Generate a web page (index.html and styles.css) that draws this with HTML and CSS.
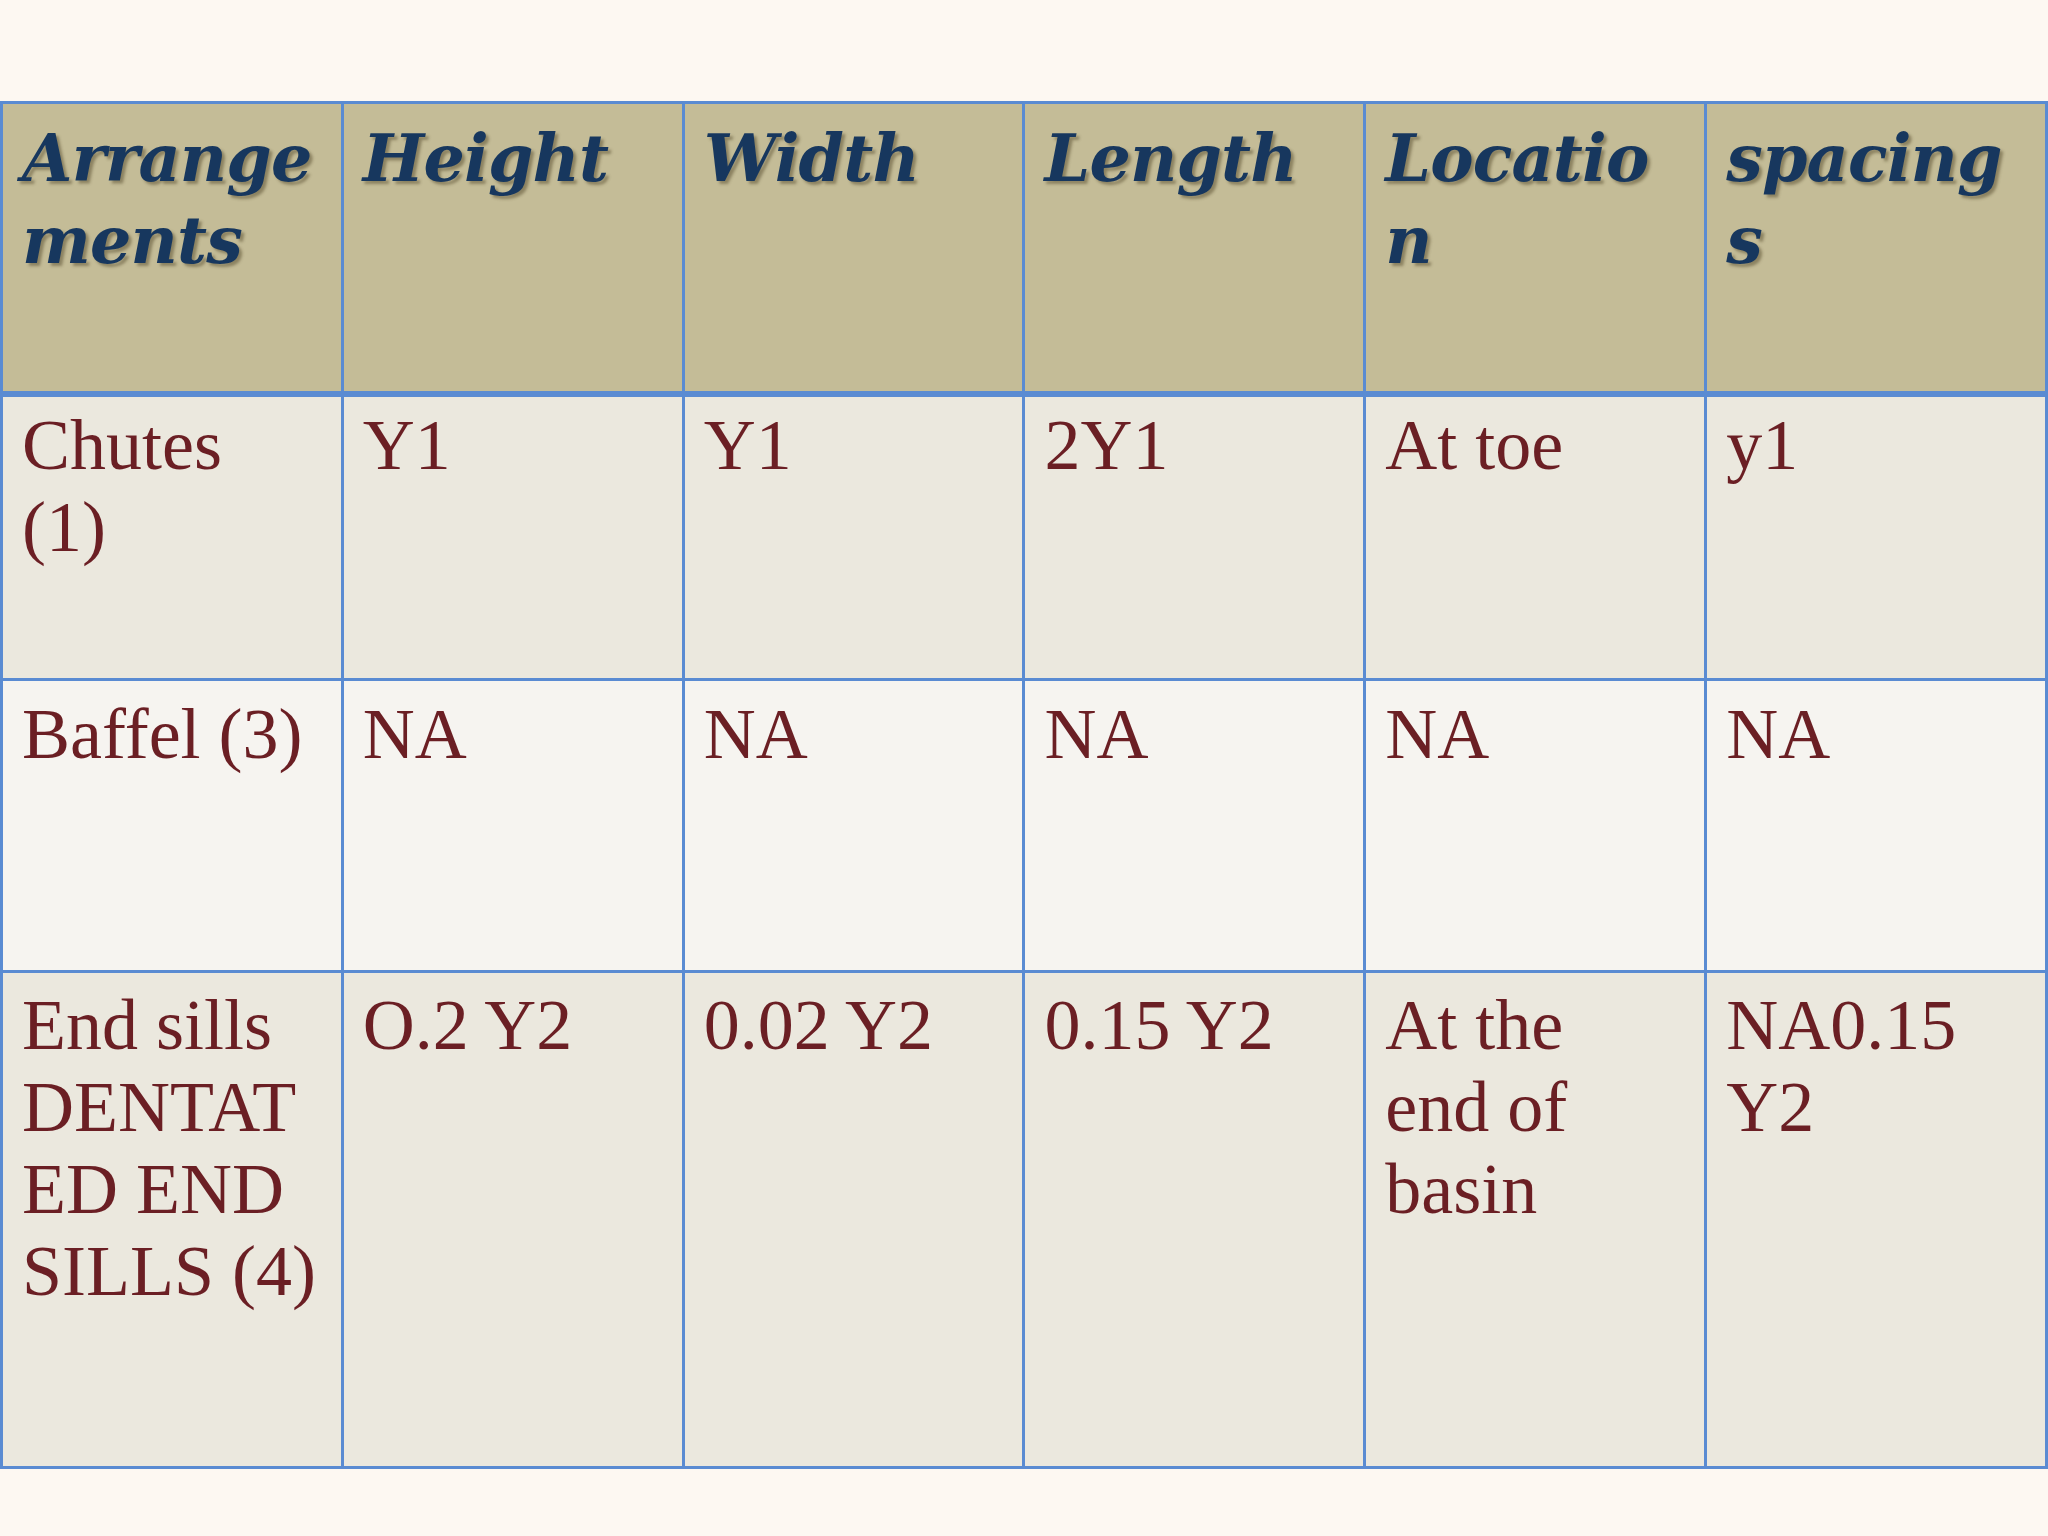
FILE: index.html
```html
<!DOCTYPE html>
<html lang="en">
<head>
<meta charset="utf-8">
<title>Arrangements</title>
<link rel="stylesheet" href="styles.css">
</head>
<body>
<main class="slide">
  <table class="grid">
    <thead>
      <tr class="head-row">
        <th>Arrange<br>ments</th>
        <th>Height</th>
        <th>Width</th>
        <th>Length</th>
        <th>Locatio<br>n</th>
        <th>spacing<br>s</th>
      </tr>
    </thead>
    <tbody>
      <tr class="row row-a row-1">
        <td>Chutes<br>(1)</td>
        <td>Y1</td>
        <td>Y1</td>
        <td>2Y1</td>
        <td>At toe</td>
        <td>y1</td>
      </tr>
      <tr class="row row-b row-2">
        <td>Baffel (3)</td>
        <td>NA</td>
        <td>NA</td>
        <td>NA</td>
        <td>NA</td>
        <td>NA</td>
      </tr>
      <tr class="row row-a row-3">
        <td>End sills<br>DENTAT<br>ED END<br>SILLS (4)</td>
        <td>O.2 Y2</td>
        <td>0.02 Y2</td>
        <td>0.15 Y2</td>
        <td>At the<br>end of<br>basin</td>
        <td>NA0.15<br>Y2</td>
      </tr>
    </tbody>
  </table>
</main>
</body>
</html>
```
FILE: styles.css
```css
html, body {
  margin: 0;
  padding: 0;
  background: #fdf8f2;
}

.slide {
  width: 2048px;
  height: 1536px;
  padding-top: 101px;
  box-sizing: border-box;
  overflow: hidden;
}

.grid {
  width: 2048px;
  table-layout: fixed;
  border-collapse: collapse;
}

.grid th,
.grid td {
  border: 3px solid #5a8bd2;
  vertical-align: top;
  text-align: left;
  padding: 10px 10px 0 19px;
  box-sizing: border-box;
}

.head-row th {
  background: #c4bc97;
  height: 291px;
  border-bottom: 6px solid #5a8bd2;
  padding-top: 13px;
  font-family: "DejaVu Serif", "Liberation Serif", serif;
  font-weight: bold;
  font-style: italic;
  font-size: 65px;
  line-height: 82px;
  color: #17375e;
  text-shadow: 3px 3px 3px rgba(70, 60, 30, 0.45);
  letter-spacing: -0.8px;
}

.row td {
  font-family: "Liberation Serif", "Times New Roman", serif;
  font-size: 72px;
  line-height: 82px;
  color: #6b1f24;
}

.row-a td {
  background: #ebe8de;
}

.row-b td {
  background: #f6f4f0;
  padding-top: 12px;
}

.row-1 td {
  height: 286px;
  padding-top: 7px;
}

.row-2 td {
  height: 292px;
}

.row-3 td {
  height: 496px;
  padding-top: 11px;
}
```
